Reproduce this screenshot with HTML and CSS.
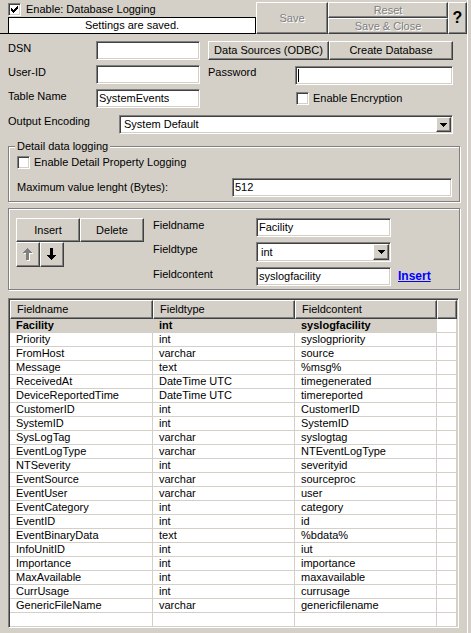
FILE: index.html
```html
<!DOCTYPE html>
<html lang="en">
<head>
<meta charset="utf-8">
<title>Database Logging</title>
<link rel="stylesheet" href="styles.css">
</head>
<body>
<div class="window">
  <div class="toolbar">
    <div class="toolbar-left">
      <div class="check-line top">
        <span class="chk"><svg class="tick" width="7" height="7" viewBox="0 0 7 7"><path d="M0 2h1v3h-1z M1 3h1v3h-1z M2 4h1v3h-1z M3 3h1v3h-1z M4 2h1v3h-1z M5 1h1v3h-1z M6 0h1v3h-1z"/></svg></span>
        <span>Enable: Database Logging</span>
      </div>
      <div class="status">Settings are saved.</div>
    </div>
    <button class="btn btn-save" disabled>Save</button>
    <div class="btn-stack">
      <button class="btn btn-half" disabled>Reset</button>
      <button class="btn btn-half" disabled>Save &amp; Close</button>
    </div>
    <button class="btn btn-help">?</button>
  </div>

  <div class="conn">
    <span class="lbl">DSN</span>
    <div class="field c2"></div>
    <button class="btn odbc">Data Sources (ODBC)</button>
    <button class="btn createdb">Create Database</button>

    <span class="lbl">User-ID</span>
    <div class="field c2"></div>
    <span class="lbl pw-lbl">Password</span>
    <div class="field pw"><span class="caret"></span></div>

    <span class="lbl">Table Name</span>
    <div class="field c2">SystemEvents</div>
    <div class="check-line enc"><span class="chk"></span><span>Enable Encryption</span></div>
  </div>

  <div class="encoding">
    <span class="lbl enc-lbl">Output Encoding</span>
    <div class="combo enc-combo">
      <span class="combo-text">System Default</span>
      <span class="combo-btn"><svg width="7" height="4" viewBox="0 0 7 4"><path d="M0 0h7v1h-7z M1 1h5v1h-5z M2 2h3v1h-3z M3 3h1v1h-1z"/></svg></span>
    </div>
  </div>

  <fieldset class="group detail">
    <legend>Detail data logging</legend>
    <div class="check-line detail-check"><span class="chk"></span><span>Enable Detail Property Logging</span></div>
    <div class="maxrow">
      <span class="lbl">Maximum value lenght (Bytes):</span>
      <div class="field maxfield">512</div>
    </div>
  </fieldset>

  <fieldset class="group editor">
    <div class="editor-body">
      <div class="tools">
        <div class="tools-row">
          <button class="btn tbtn">Insert</button>
          <button class="btn tbtn">Delete</button>
        </div>
        <div class="tools-row">
          <button class="btn abtn" disabled><svg width="10" height="13" viewBox="0 0 10 13"><g transform="translate(1 1)" fill="#fff"><path d="M4 0h1v1h-1z M3 1h3v1h-3z M2 2h5v1h-5z M1 3h7v1h-7z M0 4h9v1h-9z M3 5h3v7h-3z"/></g><g fill="#808080"><path d="M4 0h1v1h-1z M3 1h3v1h-3z M2 2h5v1h-5z M1 3h7v1h-7z M0 4h9v1h-9z M3 5h3v7h-3z"/></g></svg></button>
          <button class="btn abtn"><svg width="10" height="13" viewBox="0 0 10 13"><path d="M3 0h3v7h-3z M0 7h9v1h-9z M1 8h7v1h-7z M2 9h5v1h-5z M3 10h3v1h-3z M4 11h1v1h-1z"/></svg></button>
        </div>
      </div>
      <div class="fields">
        <span class="lbl">Fieldname</span>
        <div class="field">Facility</div>
        <span></span>
        <span class="lbl">Fieldtype</span>
        <div class="combo">
          <span class="combo-text">int</span>
          <span class="combo-btn"><svg width="7" height="4" viewBox="0 0 7 4"><path d="M0 0h7v1h-7z M1 1h5v1h-5z M2 2h3v1h-3z M3 3h1v1h-1z"/></svg></span>
        </div>
        <span></span>
        <span class="lbl">Fieldcontent</span>
        <div class="field">syslogfacility</div>
        <a class="link" href="#">Insert</a>
      </div>
    </div>
  </fieldset>

  <div class="list">
    <table class="grid">
      <thead>
        <tr><th class="w1">Fieldname</th><th class="w2">Fieldtype</th><th class="w3">Fieldcontent</th><th class="w4"></th></tr>
      </thead>
      <tbody>
        <tr class="sel"><td>Facility</td><td>int</td><td>syslogfacility</td><td></td></tr>
        <tr><td>Priority</td><td>int</td><td>syslogpriority</td><td></td></tr>
        <tr><td>FromHost</td><td>varchar</td><td>source</td><td></td></tr>
        <tr><td>Message</td><td>text</td><td>%msg%</td><td></td></tr>
        <tr><td>ReceivedAt</td><td>DateTime UTC</td><td>timegenerated</td><td></td></tr>
        <tr><td>DeviceReportedTime</td><td>DateTime UTC</td><td>timereported</td><td></td></tr>
        <tr><td>CustomerID</td><td>int</td><td>CustomerID</td><td></td></tr>
        <tr><td>SystemID</td><td>int</td><td>SystemID</td><td></td></tr>
        <tr><td>SysLogTag</td><td>varchar</td><td>syslogtag</td><td></td></tr>
        <tr><td>EventLogType</td><td>varchar</td><td>NTEventLogType</td><td></td></tr>
        <tr><td>NTSeverity</td><td>int</td><td>severityid</td><td></td></tr>
        <tr><td>EventSource</td><td>varchar</td><td>sourceproc</td><td></td></tr>
        <tr><td>EventUser</td><td>varchar</td><td>user</td><td></td></tr>
        <tr><td>EventCategory</td><td>int</td><td>category</td><td></td></tr>
        <tr><td>EventID</td><td>int</td><td>id</td><td></td></tr>
        <tr><td>EventBinaryData</td><td>text</td><td>%bdata%</td><td></td></tr>
        <tr><td>InfoUnitID</td><td>int</td><td>iut</td><td></td></tr>
        <tr><td>Importance</td><td>int</td><td>importance</td><td></td></tr>
        <tr><td>MaxAvailable</td><td>int</td><td>maxavailable</td><td></td></tr>
        <tr><td>CurrUsage</td><td>int</td><td>currusage</td><td></td></tr>
        <tr><td>GenericFileName</td><td>varchar</td><td>genericfilename</td><td></td></tr>
        <tr class="empty"><td></td><td></td><td></td><td></td></tr>
      </tbody>
    </table>
  </div>
</div>
</body>
</html>
```
FILE: styles.css
```css
* { box-sizing: border-box; }
html, body { margin: 0; padding: 0; }
body {
  width: 471px;
  height: 633px;
  overflow: hidden;
  background: #d4d0c8;
  color: #000;
  font-family: "Liberation Sans", Arial, sans-serif;
  font-size: 11px;
  line-height: 13px;
}
button { font: inherit; }
svg { display: block; shape-rendering: crispEdges; }

.window {
  width: 468px;
  height: 633px;
  border-right: 1px solid #fff;
}

/* ---------- top bar ---------- */
.toolbar { display: flex; align-items: flex-start; height: 34px; }
.toolbar-left {
  width: 256px;
  height: 34px;
  padding-top: 3px;
  border-bottom: 1px solid #000;
}
.check-line { display: flex; align-items: center; gap: 4px; white-space: nowrap; }
.check-line.top { padding-left: 8px; gap: 5px; }
.status {
  width: 248px;
  height: 16px;
  margin: 1px 0 0 8px;
  border: 1px solid #000;
  border-bottom: 0;
  background: #fff;
  text-align: center;
  line-height: 15px;
}

.chk {
  flex: none;
  width: 13px;
  height: 13px;
  display: flex;
  align-items: center;
  justify-content: center;
  background: #fff;
  border: 1px solid;
  border-color: #808080 #fff #fff #808080;
  box-shadow: inset 1px 1px #404040, inset -1px -1px #d4d0c8;
}

.btn {
  display: flex;
  align-items: center;
  justify-content: center;
  margin: 0;
  padding: 0;
  background: #d4d0c8;
  color: #000;
  border: 1px solid;
  border-color: #fff #404040 #404040 #fff;
  box-shadow: inset -1px -1px #808080;
  white-space: nowrap;
  line-height: 13px;
}
.btn:disabled { color: #808080; text-shadow: 1px 1px #fff; }
.btn-save { width: 72px; height: 32px; margin-top: 2px; flex: none; }
.btn-stack { display: flex; flex-direction: column; width: 120px; margin-top: 2px; flex: none; }
.btn-half { height: 16px; }
.btn-help {
  width: 19px;
  height: 32px;
  margin-top: 2px;
  flex: none;
  font-size: 16px;
  font-weight: bold;
  line-height: 1;
}

/* ---------- connection fields ---------- */
.lbl { white-space: nowrap; }
.conn {
  display: grid;
  grid-template-columns: 88px 104px 8px 87px 34px 124px;
  grid-template-rows: 19px 19px 19px;
  row-gap: 5px;
  padding: 7px 0 0 8px;
}
.conn .lbl { align-self: start; padding-top: 1px; }
.c2 { grid-column: 2; }
.odbc { grid-column: 4 / 6; }
.createdb { grid-column: 6; }
.pw-lbl { grid-column: 4; }
.pw { grid-column: 5 / 7; margin-top: 1px; height: 19px; }
.enc { grid-column: 5 / 7; padding-left: 1px; }

.field {
  display: flex;
  align-items: center;
  background: #fff;
  border: 1px solid;
  border-color: #808080 #fff #fff #808080;
  box-shadow: inset 1px 1px #404040, inset -1px -1px #d4d0c8;
  padding: 0 2px;
  white-space: nowrap;
  overflow: hidden;
}
.caret { width: 1px; height: 13px; background: #000; }

.encoding { display: flex; padding: 7px 0 0 8px; }
.enc-lbl { width: 111px; padding-top: 0; }
.combo {
  display: flex;
  height: 20px;
  padding: 1px;
  background: #fff;
  border: 1px solid;
  border-color: #808080 #fff #fff #808080;
  box-shadow: inset 1px 1px #404040, inset -1px -1px #d4d0c8;
}
.enc-combo { width: 334px; height: 19px; }
.combo-text { flex: 1; display: flex; align-items: center; padding-left: 3px; white-space: nowrap; }
.combo-btn {
  flex: none;
  width: 16px;
  display: flex;
  align-items: center;
  justify-content: center;
  background: #d4d0c8;
  border: 1px solid;
  border-color: #fff #404040 #404040 #fff;
  box-shadow: inset -1px -1px #808080;
}
.enc-combo .combo-btn { width: 15px; }

/* ---------- group boxes ---------- */
.group {
  margin: 6px 0 0 8px;
  width: 452px;
  min-width: 0;
  padding: 0 7px 4px 8px;
  border: 1px solid #808080;
  box-shadow: inset 1px 1px #fff, 1px 1px #fff;
}
.group legend {
  padding: 0 2px;
  margin-left: -2px;
  line-height: 13px;
  background: #d4d0c8;
}
.detail-check { margin-top: 3px; }
.maxrow {
  display: flex;
  align-items: center;
  justify-content: space-between;
  margin-top: 9px;
}
.maxfield { width: 220px; height: 19px; }

.editor { padding: 9px 7px 3px 7px; }
.editor-body { display: flex; }
.tools { width: 128px; flex: none; }
.tools-row { display: flex; }
.tbtn { width: 64px; height: 24px; }
.abtn { width: 24px; height: 25px; }
.fields {
  display: grid;
  grid-template-columns: 103px 135px auto;
  grid-template-rows: 19px 20px 19px;
  row-gap: 5px;
  margin-left: 9px;
}
.fields .lbl { align-self: start; padding-top: 1px; }
.link {
  align-self: center;
  margin-left: 7px;
  font-size: 12px;
  font-weight: bold;
  color: #00f;
  text-decoration: underline;
}

/* ---------- list ---------- */
.list {
  margin: 8px 0 0 8px;
  width: 451px;
  height: 330px;
  padding: 1px;
  background: #fff;
  border: 1px solid;
  border-color: #808080 #fff #fff #808080;
  box-shadow: inset 1px 1px #404040, inset -1px -1px #d4d0c8;
  overflow: hidden;
}
.grid {
  border-collapse: separate;
  border-spacing: 0;
  table-layout: fixed;
  width: 447px;
}
.grid th {
  height: 19px;
  padding: 0 0 0 6px;
  text-align: left;
  font-weight: normal;
  background: #d4d0c8;
  border: 1px solid;
  border-color: #fff #404040 #404040 #fff;
  box-shadow: inset -1px -1px #808080;
  white-space: nowrap;
}
.grid .w1 { width: 143px; }
.grid .w2 { width: 142px; }
.grid .w3 { width: 142px; }
.grid .w4 { width: 20px; }
.grid td {
  height: 14px;
  padding: 0 0 0 6px;
  border-right: 1px solid #d4d0c8;
  border-bottom: 1px solid #d4d0c8;
  white-space: nowrap;
  overflow: hidden;
}
.grid tr.empty td { height: 13px; border-bottom: 0; }
.grid tr.sel td { background: #d4d0c8; font-weight: bold; }
.grid tr.sel td:last-child { background: #fff; }
```
